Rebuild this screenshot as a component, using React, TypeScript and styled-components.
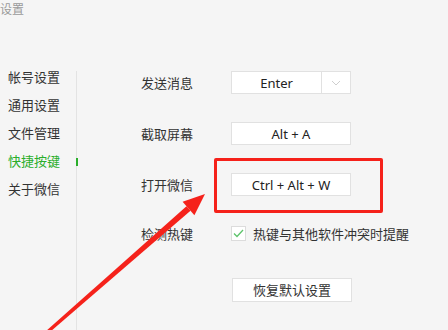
import React from 'react';
import styled, { createGlobalStyle } from 'styled-components';

const GlobalStyle = createGlobalStyle`
  html, body {
    margin: 0;
    padding: 0;
    background: #f5f5f5;
  }
  body {
    font-family: "Noto Sans", "Noto Sans CJK SC", sans-serif;
    color: #333;
  }
`;

const Page = styled.div`
  position: relative;
  width: 448px;
  height: 330px;
  overflow: hidden;
  background: #f5f5f5;
`;

const Header = styled.div`
  height: 63px;
  box-sizing: border-box;
  padding: 1px 0 0 0;
  font-size: 12px;
  line-height: 16px;
  color: #9a9a9a;
  font-family: "Noto Sans CJK SC", sans-serif;
`;

const Main = styled.div`
  display: flex;
  height: 267px;
`;

const Nav = styled.ul`
  list-style: none;
  margin: 0;
  padding: 0 0 0 8px;
  width: 68px;
`;

const NavItem = styled.li<{ $active?: boolean }>`
  position: relative;
  height: 28px;
  line-height: 28px;
  font-size: 13px;
  font-family: "Noto Sans CJK SC", sans-serif;
  color: ${(p) => (p.$active ? '#2aae2b' : '#333')};
  white-space: nowrap;

  &::after {
    content: '';
    display: ${(p) => (p.$active ? 'block' : 'none')};
    position: absolute;
    right: -2px;
    top: 11px;
    width: 2px;
    height: 8px;
    background: #2aae2b;
  }
`;

const Divider = styled.div`
  width: 1px;
  margin-top: 8px;
  background: #e3e3e3;
`;

const Content = styled.div`
  flex: 1;
  padding: 8px 0 0 64px;
  display: flex;
  flex-direction: column;
`;

const Row = styled.div<{ $top: number }>`
  position: relative;
  display: flex;
  align-items: center;
  height: 23px;
  margin-top: ${(p) => p.$top}px;
`;

const Label = styled.div`
  width: 90px;
  font-size: 13px;
  font-family: "Noto Sans CJK SC", sans-serif;
  color: #333;
`;

const KeyBox = styled.div`
  display: flex;
  width: 120px;
  height: 23px;
  box-sizing: border-box;
  border: 1px solid #e1e1e1;
  background: #fff;
`;

const KeyText = styled.div`
  flex: 1;
  display: flex;
  align-items: center;
  justify-content: center;
  font-size: 13px;
  color: #222;
  font-family: "Noto Sans", sans-serif;
`;

const DropPart = styled.div`
  width: 28px;
  border-left: 1px solid #e1e1e1;
  display: flex;
  align-items: center;
  justify-content: center;
`;

const Highlight = styled.div`
  position: absolute;
  left: 73px;
  top: -15px;
  width: 169px;
  height: 55px;
  box-sizing: border-box;
  border: 3px solid #f5211a;
  border-radius: 2px;
`;

const Check = styled.div`
  width: 15px;
  height: 15px;
  box-sizing: border-box;
  border: 1px solid #dcdcdc;
  background: #fff;
  display: flex;
  align-items: center;
  justify-content: center;
  margin-right: 7px;
`;

const CheckText = styled.div`
  font-size: 13px;
  font-family: "Noto Sans CJK SC", sans-serif;
  color: #333;
`;

const ResetButton = styled.button`
  width: 120px;
  height: 24px;
  margin-left: 91px;
  padding: 0;
  border: 1px solid #e1e1e1;
  background: #fff;
  font-size: 13px;
  font-family: "Noto Sans CJK SC", sans-serif;
  color: #333;
`;

const Arrow = styled.svg`
  position: absolute;
  left: 0;
  top: 0;
  pointer-events: none;
`;

const navItems = ['帐号设置', '通用设置', '文件管理', '快捷按键', '关于微信'];

export default function App() {
  return (
    <Page>
      <GlobalStyle />
      <Header>设置</Header>
      <Main>
        <Nav>
          {navItems.map((n) => (
            <NavItem key={n} $active={n === '快捷按键'}>{n}</NavItem>
          ))}
        </Nav>
        <Divider />
        <Content>
          <Row $top={0}>
            <Label>发送消息</Label>
            <KeyBox>
              <KeyText>Enter</KeyText>
              <DropPart>
                <svg width="10" height="6" viewBox="0 0 10 6">
                  <path d="M1 1 L5 5 L9 1" fill="none" stroke="#cfcfcf" strokeWidth="1" />
                </svg>
              </DropPart>
            </KeyBox>
          </Row>
          <Row $top={28}>
            <Label>截取屏幕</Label>
            <KeyBox><KeyText>Alt + A</KeyText></KeyBox>
          </Row>
          <Row $top={28}>
            <Label>打开微信</Label>
            <KeyBox><KeyText>Ctrl + Alt + W</KeyText></KeyBox>
            <Highlight />
          </Row>
          <Row $top={26}>
            <Label>检测热键</Label>
            <Check>
              <svg width="11" height="9" viewBox="0 0 11 9">
                <path d="M1 4.5 L4 7.5 L10 1" fill="none" stroke="#5ec46c" strokeWidth="1.3" />
              </svg>
            </Check>
            <CheckText>热键与其他软件冲突时提醒</CheckText>
          </Row>
          <Row $top={33}>
            <ResetButton>恢复默认设置</ResetButton>
          </Row>
        </Content>
      </Main>
      <Arrow width="448" height="330" viewBox="0 0 448 330">
        <polygon points="43,338 41,335.5 186.5,206.3 190.5,210.8" fill="#f5221b" />
        <polygon points="205,194 182.6,201.7 194.4,215.3" fill="#f5221b" />
      </Arrow>
    </Page>
  );
}
